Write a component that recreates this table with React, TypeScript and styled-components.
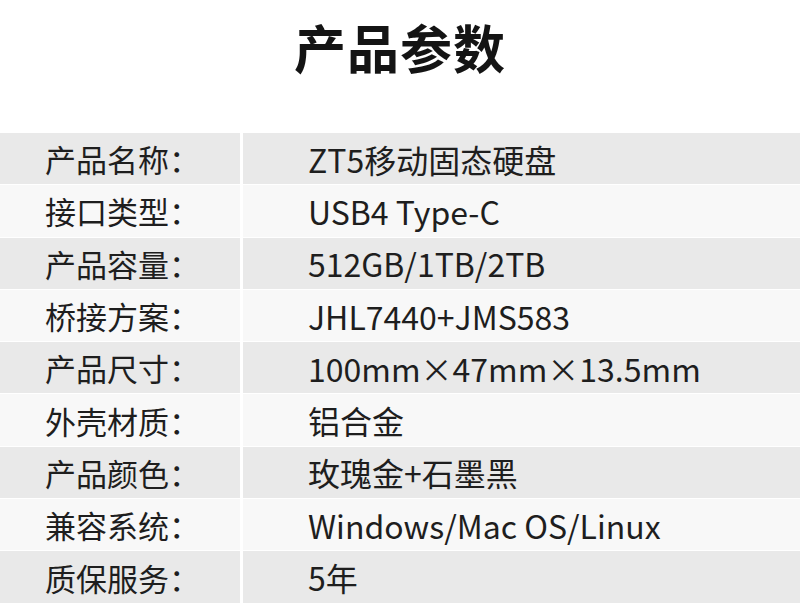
import { Fragment } from 'react';
import styled, { createGlobalStyle } from 'styled-components';

const GlobalStyle = createGlobalStyle`
  html, body {
    margin: 0;
    padding: 0;
    background: #ffffff;
  }
  body {
    font-family: "Noto Sans CJK SC", "Noto Sans", sans-serif;
    color: #1c1c1c;
  }
`;

const Page = styled.div`
  width: 800px;
  height: 607px;
  overflow: hidden;
  background: #ffffff;
`;

const Title = styled.h1`
  margin: 0;
  height: 133px;
  padding-top: 14px;
  box-sizing: border-box;
  text-align: center;
  font-size: 52px;
  font-weight: 700;
  line-height: 66px;
  letter-spacing: 1px;
  color: #141414;
`;

const Table = styled.div`
  display: grid;
  grid-template-columns: 240px 1fr;
  column-gap: 3px;
  row-gap: 1px;
`;

const Cell = styled.div<{ $shade: boolean; $label?: boolean }>`
  height: 51.3px;
  display: flex;
  align-items: center;
  box-sizing: border-box;
  padding-left: ${({ $label }) => ($label ? '45px' : '65px')};
  background: ${({ $shade }) => ($shade ? '#e9e9e9' : '#f8f8f8')};
  font-size: ${({ $label }) => ($label ? '31px' : '32px')};
  font-weight: 400;
  color: #1e1e1e;
  white-space: nowrap;
`;

const specs: [string, string][] = [
  ['产品名称：', 'ZT5移动固态硬盘'],
  ['接口类型：', 'USB4 Type-C'],
  ['产品容量：', '512GB/1TB/2TB'],
  ['桥接方案：', 'JHL7440+JMS583'],
  ['产品尺寸：', '100mm×47mm×13.5mm'],
  ['外壳材质：', '铝合金'],
  ['产品颜色：', '玫瑰金+石墨黑'],
  ['兼容系统：', 'Windows/Mac OS/Linux'],
  ['质保服务：', '5年'],
];

const App = () => {
  return (
    <>
      <GlobalStyle />
      <Page>
        <Title>产品参数</Title>
        <Table>
          {specs.map(([label, value], idx) => (
            <Fragment key={idx}>
              <Cell $shade={idx % 2 === 0} $label>
                {label}
              </Cell>
              <Cell $shade={idx % 2 === 0}>{value}</Cell>
            </Fragment>
          ))}
        </Table>
      </Page>
    </>
  );
};

export default App;
